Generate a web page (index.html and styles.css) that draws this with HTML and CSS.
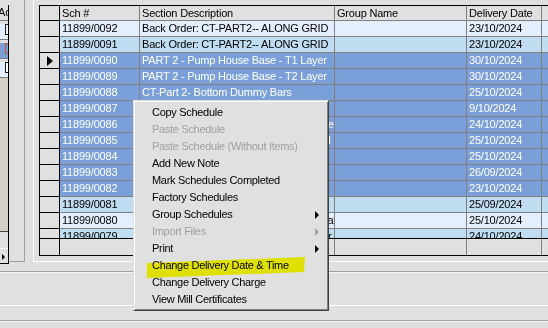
FILE: index.html
```html
<!DOCTYPE html>
<html lang="en">
<head>
<meta charset="UTF-8" />
<title>Schedules</title>
<link rel="stylesheet" href="styles.css">
</head>
<body>

<div class="window">
  <div class="top">
    <div class="side-panel">
      <div class="mini-grid">
        <div class="mini-head">Ac</div>
        <div class="mini-row light"><span class="chk"></span></div>
        <div class="mini-row sel"><span class="chk chk-focus"></span></div>
        <div class="mini-row light"><span class="chk"></span></div>
        <div class="mini-fill"></div>
        <div class="mini-scroll"><span class="mini-btn"></span></div>
      </div>
    </div>

    <div class="grid-panel">
      <div class="grid">
        <div class="grid-row grid-head">
          <div class="cell rh"></div>
          <div class="cell c-sch">Sch #</div>
          <div class="cell c-desc">Section Description</div>
          <div class="cell c-group">Group Name</div>
          <div class="cell c-date">Delivery Date</div>
          <div class="cell c-rest"></div>
        </div>

        <div class="grid-body">
          <div class="grid-row alt-a">
            <div class="cell rh"></div>
            <div class="cell c-sch">11899/0092</div>
            <div class="cell c-desc">Back Order: CT-PART2-- ALONG GRID</div>
            <div class="cell c-group"></div>
            <div class="cell c-date">23/10/2024</div>
            <div class="cell c-rest"></div>
          </div>
          <div class="grid-row alt-b">
            <div class="cell rh"></div>
            <div class="cell c-sch">11899/0091</div>
            <div class="cell c-desc">Back Order: CT-PART2-- ALONG GRID</div>
            <div class="cell c-group"></div>
            <div class="cell c-date">23/10/2024</div>
            <div class="cell c-rest"></div>
          </div>
          <div class="grid-row selected">
            <div class="cell rh"><span class="row-pointer"></span></div>
            <div class="cell c-sch">11899/0090</div>
            <div class="cell c-desc">PART 2 - Pump House Base - T1 Layer</div>
            <div class="cell c-group"></div>
            <div class="cell c-date">30/10/2024</div>
            <div class="cell c-rest"></div>
          </div>
          <div class="grid-row selected">
            <div class="cell rh"></div>
            <div class="cell c-sch">11899/0089</div>
            <div class="cell c-desc">PART 2 - Pump House Base - T2 Layer</div>
            <div class="cell c-group"></div>
            <div class="cell c-date">30/10/2024</div>
            <div class="cell c-rest"></div>
          </div>
          <div class="grid-row selected">
            <div class="cell rh"></div>
            <div class="cell c-sch">11899/0088</div>
            <div class="cell c-desc">CT-Part 2- Bottom Dummy Bars</div>
            <div class="cell c-group"></div>
            <div class="cell c-date">25/10/2024</div>
            <div class="cell c-rest"></div>
          </div>
          <div class="grid-row selected">
            <div class="cell rh"></div>
            <div class="cell c-sch">11899/0087</div>
            <div class="cell c-desc">CT-Part 2- Top Dummy Bars</div>
            <div class="cell c-group"></div>
            <div class="cell c-date">9/10/2024</div>
            <div class="cell c-rest"></div>
          </div>
          <div class="grid-row selected">
            <div class="cell rh"></div>
            <div class="cell c-sch">11899/0086</div>
            <div class="cell c-desc">PART 2 - Pump House Base - Starter Tie</div>
            <div class="cell c-group"></div>
            <div class="cell c-date">24/10/2024</div>
            <div class="cell c-rest"></div>
          </div>
          <div class="grid-row selected">
            <div class="cell rh"></div>
            <div class="cell c-sch">11899/0085</div>
            <div class="cell c-desc">PART 2 - Pump House Walls - Level GH</div>
            <div class="cell c-group"></div>
            <div class="cell c-date">25/10/2024</div>
            <div class="cell c-rest"></div>
          </div>
          <div class="grid-row selected">
            <div class="cell rh"></div>
            <div class="cell c-sch">11899/0084</div>
            <div class="cell c-desc">PART 2 - Pump House Walls - Level 2</div>
            <div class="cell c-group"></div>
            <div class="cell c-date">25/10/2024</div>
            <div class="cell c-rest"></div>
          </div>
          <div class="grid-row selected">
            <div class="cell rh"></div>
            <div class="cell c-sch">11899/0083</div>
            <div class="cell c-desc">CT-Part 2- Wall Ties</div>
            <div class="cell c-group"></div>
            <div class="cell c-date">26/09/2024</div>
            <div class="cell c-rest"></div>
          </div>
          <div class="grid-row selected">
            <div class="cell rh"></div>
            <div class="cell c-sch">11899/0082</div>
            <div class="cell c-desc">CT-Part 2- Mesh</div>
            <div class="cell c-group"></div>
            <div class="cell c-date">23/10/2024</div>
            <div class="cell c-rest"></div>
          </div>
          <div class="grid-row alt-b">
            <div class="cell rh"></div>
            <div class="cell c-sch">11899/0081</div>
            <div class="cell c-desc">CT-Part 1- Slab Edge Bars</div>
            <div class="cell c-group"></div>
            <div class="cell c-date">25/09/2024</div>
            <div class="cell c-rest"></div>
          </div>
          <div class="grid-row alt-a">
            <div class="cell rh"></div>
            <div class="cell c-sch">11899/0080</div>
            <div class="cell c-desc">PART 1 - Pump House Base - Bottom Layer 1</div>
            <div class="cell c-group"></div>
            <div class="cell c-date">25/10/2024</div>
            <div class="cell c-rest"></div>
          </div>
          <div class="grid-row alt-b">
            <div class="cell rh"></div>
            <div class="cell c-sch">11899/0079</div>
            <div class="cell c-desc">PART 1 - Pump House Base - Top Layer T1</div>
            <div class="cell c-group"></div>
            <div class="cell c-date">24/10/2024</div>
            <div class="cell c-rest"></div>
          </div>
        </div>

        <div class="grid-row grid-foot">
          <div class="cell rh"></div>
          <div class="cell c-sch"></div>
          <div class="cell c-desc"></div>
          <div class="cell c-group"></div>
          <div class="cell c-date"></div>
          <div class="cell c-rest"></div>
        </div>
      </div>
    </div>
  </div>

  <div class="bottom-panel"></div>
  <div class="status-bar"></div>
</div>

<div class="ctx-menu">
  <div class="menu-item">Copy Schedule</div>
  <div class="menu-item disabled">Paste Schedule</div>
  <div class="menu-item disabled">Paste Schedule (Without Items)</div>
  <div class="menu-item">Add New Note</div>
  <div class="menu-item">Mark Schedules Completed</div>
  <div class="menu-item">Factory Schedules</div>
  <div class="menu-item">Group Schedules <span class="sub-arrow"></span></div>
  <div class="menu-item disabled">Import Files <span class="sub-arrow"></span></div>
  <div class="menu-item">Print <span class="sub-arrow"></span></div>
  <div class="menu-item">Change Delivery Date &amp; Time</div>
  <div class="menu-item">Change Delivery Charge</div>
  <div class="menu-item">View Mill Certificates</div>

  <!-- marker highlight drawn over the screenshot -->
  <svg class="marker" width="196" height="211" viewBox="0 0 196 211">
    <polygon points="14,163 172,157 171,172 14,178" fill="#ffff00" />
  </svg>
</div>

</body>
</html>
```

FILE: styles.css
```css
body {
  margin: 0;
  width: 548px;
  height: 328px;
  overflow: hidden;
  background: #e0e0e0;
  font-family: "Liberation Sans", Arial, sans-serif;
  font-size: 11px;
  color: #000;
  position: relative;
}

.window {
  display: flex;
  flex-direction: column;
}

.top {
  display: flex;
  height: 262px;
}

/* left panel with the cut-off grid */
.side-panel {
  width: 25px;
  height: 262px;
  box-sizing: border-box;
  border-right: 1px solid #a0a0a0;
  border-bottom: 1px solid #a0a0a0;
}
.mini-grid {
  width: 9px;
  margin-top: 5px;
  box-sizing: border-box;
  border-right: 1px solid #000;
  overflow: hidden;
}
.mini-head {
  height: 15px;
  line-height: 15px;
  border-bottom: 1px solid #808080;
  text-indent: -2px;
  white-space: nowrap;
}
.mini-row {
  height: 15px;
  border-bottom: 1px solid #808080;
  position: relative;
}
.mini-row.light {
  background: #e3efff;
}
.mini-row.sel {
  background: #7ba0d9;
}
.chk {
  display: block;
  margin: 3px 0 0 5px;
  width: 9px;
  height: 9px;
  border: 1px solid #202020;
  background: #fff;
}
.chk-focus {
  border-color: #c8501e;
  background: #7ba0d9;
}
.mini-fill {
  height: 153px;
  background: #d4d0c8;
  border-bottom: 1px solid #404040;
}
.mini-scroll {
  height: 31px;
  border-bottom: 1px solid #000;
  display: flex;
  align-items: flex-end;
}
.mini-btn {
  display: block;
  width: 8px;
  height: 14px;
  background: #e0e0e0;
  border-top: 1px solid #fff;
  position: relative;
}
.mini-btn::after {
  content: "";
  position: absolute;
  left: 2px;
  top: 5px;
  border-left: 3px solid #000;
  border-top: 3px solid transparent;
  border-bottom: 3px solid transparent;
}

/* main grid */
.grid-panel {
  flex: 1;
  margin-left: 8px;
  height: 262px;
  box-sizing: border-box;
  border-left: 1px solid #fff;
  border-bottom: 1px solid #fff;
  padding: 5px 0 0 5px;
  overflow: hidden;
}
.grid {
  border-left: 1px solid #000;
  border-top: 1px solid #000;
  border-bottom: 1px solid #000;
  width: 560px;
}
.grid-row {
  display: flex;
  height: 16px;
}
.grid-head {
  height: 15px;
}
.grid-body {
  height: 217px;
  overflow: hidden;
  border-bottom: 1px solid #000;
}
.cell {
  box-sizing: border-box;
  border-right: 1px solid #808080;
  border-bottom: 1px solid #808080;
  padding-left: 2px;
  line-height: 15px;
  white-space: nowrap;
  overflow: hidden;
  letter-spacing: -0.2px;
}
.grid-head .cell {
  line-height: 14px;
  background: #e0e0e0;
}
.grid-foot .cell {
  border-bottom: none;
  background: #e0e0e0;
}
.rh {
  width: 20px;
  flex: none;
  background: #e0e0e0;
  border-right-color: #000;
  border-bottom-color: #000;
  display: flex;
  align-items: center;
  justify-content: center;
  padding-left: 0;
}
.c-sch { width: 80px; flex: none; }
.c-desc { width: 195px; flex: none; }
.c-group { width: 132px; flex: none; }
.c-date { width: 75px; flex: none; }
.c-rest { flex: 1; }

.alt-a .cell { background: #e3efff; }
.alt-b .cell { background: #bfdcf0; }
.selected .cell {
  background: #7ba0d9;
  color: #fff;
}
.grid-row .rh { background: #e0e0e0; }

.row-pointer {
  display: block;
  border-left: 6px solid #000;
  border-top: 5px solid transparent;
  border-bottom: 5px solid transparent;
}

/* lower area */
.bottom-panel {
  margin-top: 9px;
  height: 35px;
  box-sizing: border-box;
  border-top: 1px solid #a0a0a0;
  border-bottom: 1px solid #fff;
  box-shadow: inset 0 1px #f4f4f4;
}
.status-bar {
  margin-top: 14px;
  height: 8px;
  border-top: 1px solid #a0a0a0;
  box-shadow: inset 0 1px #f4f4f4;
}

/* context menu */
.ctx-menu {
  position: absolute;
  left: 133px;
  top: 100px;
  width: 196px;
  height: 211px;
  box-sizing: border-box;
  padding: 3px 3px 2px 3px;
  background: #e0e0e0;
  border: 1px solid;
  border-color: #e0e0e0 #404040 #404040 #e0e0e0;
  box-shadow: inset 1px 1px #fff, inset -1px -1px #808080;
  letter-spacing: -0.3px;
}
.menu-item {
  height: 17px;
  line-height: 17px;
  padding: 0 6px 0 15px;
  display: flex;
  align-items: center;
  justify-content: space-between;
  white-space: nowrap;
}
.menu-item.disabled {
  color: #a0a0a0;
}
.sub-arrow {
  display: block;
  border-left: 4px solid #000;
  border-top: 4px solid transparent;
  border-bottom: 4px solid transparent;
}
.disabled .sub-arrow {
  border-left-color: #a0a0a0;
}
.marker {
  position: absolute;
  left: -1px;
  top: -1px;
  mix-blend-mode: multiply;
  pointer-events: none;
}
```
